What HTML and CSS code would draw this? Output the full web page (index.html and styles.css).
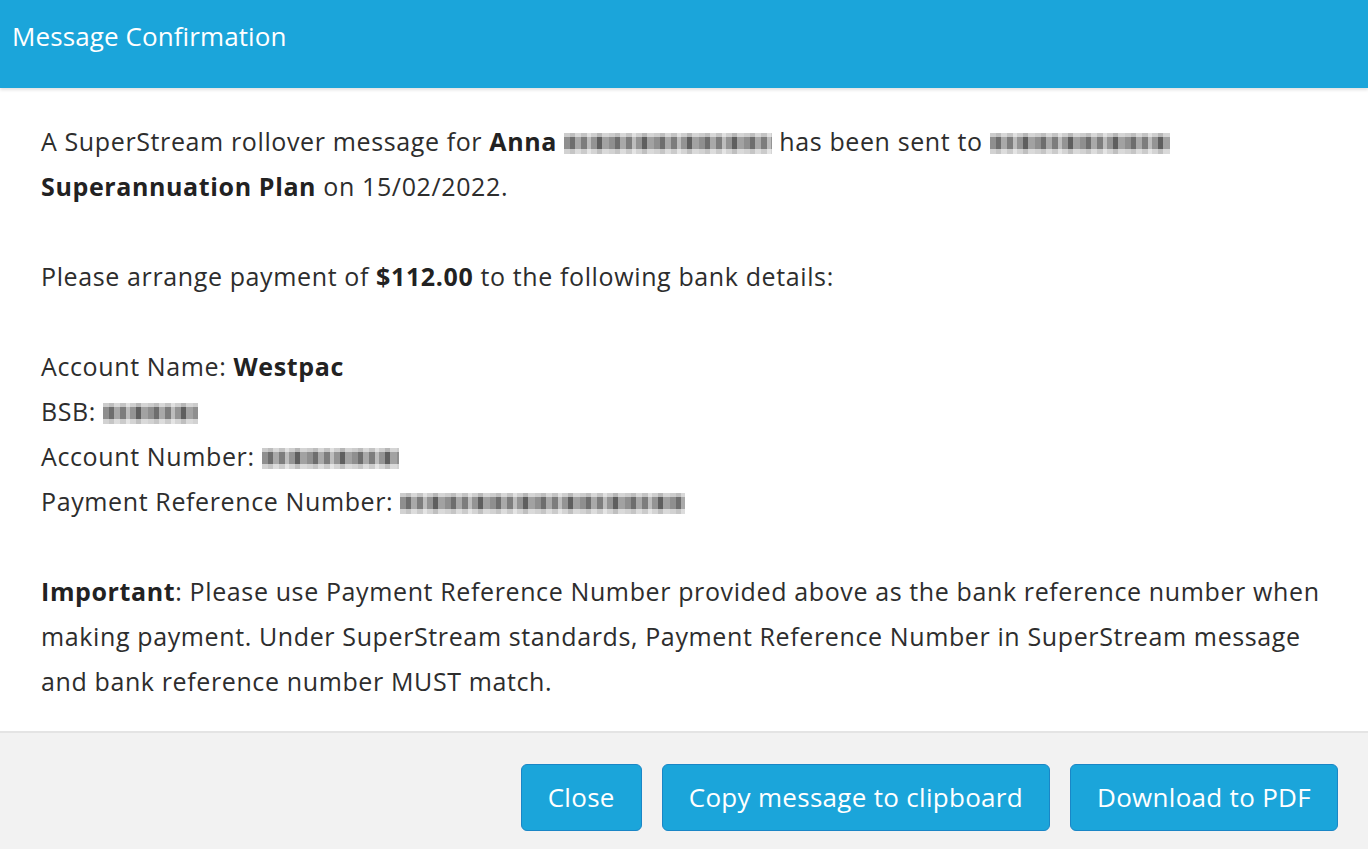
FILE: index.html
```html
<!DOCTYPE html>
<html lang="en">

<head>
	<meta charset="utf-8">
	<meta name="viewport" content="width=device-width, initial-scale=1.0">
	<title>Message Confirmation</title>
	<link rel="stylesheet" href="styles.css">
</head>

<body>
	<div class="modal">
		<div class="modal-header">
			<h1>Message Confirmation</h1>
		</div>

		<div class="modal-body">
			<p>A SuperStream rollover message for <b>Anna</b> <span class="blur w-id"></span> has been sent to <span class="blur w-fund"></span> <b>Superannuation Plan</b> on 15/02/2022.</p>

			<p>Please arrange payment of <b>$112.00</b> to the following bank details:</p>

			<p>
				Account Name: <b>Westpac</b><br>
				BSB: <span class="blur w-bsb"></span><br>
				Account Number: <span class="blur w-acc"></span><br>
				Payment Reference Number: <span class="blur w-ref"></span>
			</p>

			<p><b>Important</b>: Please use Payment Reference Number provided above as the bank reference number when making payment. Under SuperStream standards, Payment Reference Number in SuperStream message and bank reference number MUST match.</p>
		</div>

		<div class="modal-footer">
			<button>Close</button>
			<button>Copy message to clipboard</button>
			<button>Download to PDF</button>
		</div>
	</div>
</body>

</html>
```

FILE: styles.css
```css
* {
	box-sizing: border-box;
}

body {
	margin: 0;
	font-family: "Open Sans", sans-serif;
	color: #2d2d2d;
	background: #fff;
}

.modal {
	display: flex;
	flex-direction: column;
	height: 849px;
}

.modal-header {
	background: #1ba5da;
	height: 88px;
	padding: 20px 12px;
	box-shadow: 0 2px 3px rgba(0, 0, 0, 0.12);
}

.modal-header h1 {
	margin: 0;
	color: #fff;
	font-size: 26px;
	font-weight: normal;
	line-height: 32px;
	letter-spacing: 0.1px;
}

.modal-body {
	flex: 1;
	padding: 31px 41px 22px;
	font-size: 25px;
	line-height: 45px;
	letter-spacing: 0.62px;
}

.modal-body p {
	margin: 0 0 45px;
}

.modal-body p:last-child {
	margin: 0;
}

.modal-body b {
	font-weight: bold;
	color: #222;
}

/* pixelated placeholder for hidden details */
.blur {
	display: inline-block;
	height: 21px;
	vertical-align: -3px;
	background:
		linear-gradient(rgba(255,255,255,0.55) 0 4px, rgba(255,255,255,0) 4px 16px, rgba(255,255,255,0.6) 16px),
		repeating-linear-gradient(90deg, #8f8f8f 0 6px, #6e6e6e 6px 11px, #a9a9a9 11px 17px, #7d7d7d 17px 23px, #bdbdbd 23px 27px, #949494 27px 33px, #5f5f5f 33px 38px, #a2a2a2 38px 45px);
}

.w-id { width: 208px; }
.w-fund { width: 180px; }
.w-bsb { width: 95px; }
.w-acc { width: 137px; }
.w-ref { width: 285px; }

.modal-footer {
	background: #f2f2f2;
	border-top: 2px solid #e4e4e4;
	height: 118px;
	display: flex;
	justify-content: flex-end;
	align-items: center;
	gap: 20px;
	padding: 12px 30px 0;
}

.modal-footer button {
	height: 67px;
	padding: 0 26px;
	background: #1ba5da;
	color: #fff;
	border: 1px solid #1a86c6;
	border-radius: 6px;
	font-family: "Open Sans", sans-serif;
	font-size: 26px;
	letter-spacing: 0.3px;
}
```
